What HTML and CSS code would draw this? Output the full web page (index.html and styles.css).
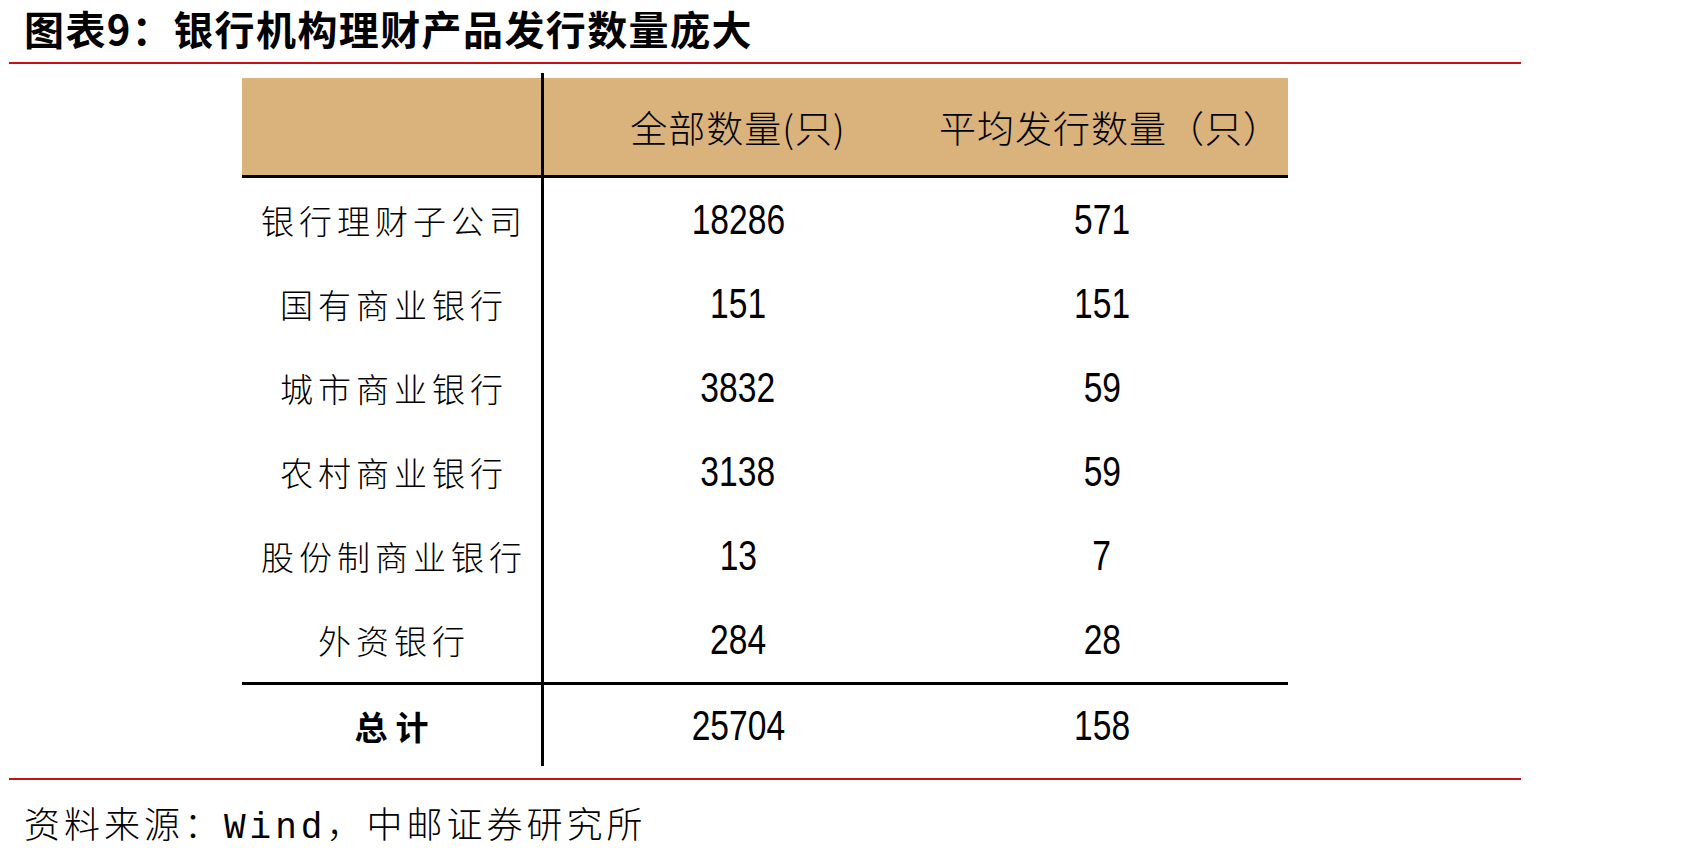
FILE: index.html
```html
<!DOCTYPE html>
<html lang="zh-CN">
<head>
<meta charset="utf-8">
<title>图表9</title>
<link rel="stylesheet" href="styles.css">
</head>
<body>
<div class="page">
  <h1 class="title">图表9：银行机构理财产品发行数量庞大</h1>
  <div class="rule"></div>
  <div class="table">
    <div class="cell head label"></div>
    <div class="cell head">全部数量(只)</div>
    <div class="cell head c3">平均发行数量（只）</div>

    <div class="cell label">银行理财子公司</div>
    <div class="cell num"><span>18286</span></div>
    <div class="cell num c3"><span>571</span></div>

    <div class="cell label">国有商业银行</div>
    <div class="cell num"><span>151</span></div>
    <div class="cell num c3"><span>151</span></div>

    <div class="cell label">城市商业银行</div>
    <div class="cell num"><span>3832</span></div>
    <div class="cell num c3"><span>59</span></div>

    <div class="cell label">农村商业银行</div>
    <div class="cell num"><span>3138</span></div>
    <div class="cell num c3"><span>59</span></div>

    <div class="cell label">股份制商业银行</div>
    <div class="cell num"><span>13</span></div>
    <div class="cell num c3"><span>7</span></div>

    <div class="cell label">外资银行</div>
    <div class="cell num"><span>284</span></div>
    <div class="cell num c3"><span>28</span></div>

    <div class="cell label total">总计</div>
    <div class="cell num total"><span>25704</span></div>
    <div class="cell num total c3"><span>158</span></div>
  </div>
  <div class="rule bottom"></div>
  <p class="source">资料来源：<span class="mono">Wind</span>，中邮证券研究所</p>
</div>
</body>
</html>
```

FILE: styles.css
```css
* { box-sizing: border-box; }
html, body {
  margin: 0;
  padding: 0;
  background: #ffffff;
}
body {
  font-family: "Noto Sans CJK SC", "Noto Sans", sans-serif;
  color: #000;
}
.page {
  width: 1512px;
  margin-left: 9px;
}
.title {
  margin: 0;
  padding-left: 15px;
  font-size: 40px;
  line-height: 56px;
  font-weight: 700;
  letter-spacing: 1.4px;
}
.rule {
  height: 2px;
  background: #c8101a;
  margin-top: 6px;
}
.rule.bottom {
  margin-top: 12px;
}
.table {
  margin-top: 9px;
  margin-left: 233px;
  width: 1046px;
  display: grid;
  grid-template-columns: 302px 388px 356px;
  grid-template-rows: 105px repeat(6, 84px) 84px;
}
.cell {
  display: flex;
  align-items: center;
  justify-content: center;
  white-space: nowrap;
}
.head {
  padding-top: 5px;
  background: #d9b27c;
  background-clip: content-box;
  border-bottom: 3px solid #000;
  font-size: 37px;
  font-weight: 300;
  letter-spacing: 1px;
}
.label {
  border-right: 3px solid #000;
  font-size: 33px;
  font-weight: 300;
  letter-spacing: 5px;
  padding-left: 5px;
}
.head.label {
  padding-left: 0;
}
.num {
  font-family: "Liberation Sans", Arial, sans-serif;
  font-size: 42px;
}
.num.c3 {
  padding-right: 16px;
}
.num span {
  display: inline-block;
  transform: scaleX(0.8);
}
.total {
  border-top: 3px solid #000;
}
.label.total {
  font-weight: 700;
  letter-spacing: 8px;
  padding-left: 8px;
}
.source {
  margin: 15px 0 0 0;
  padding-left: 15px;
  font-size: 36px;
  line-height: 54px;
  font-weight: 300;
  letter-spacing: 4px;
}
.mono {
  font-family: "Liberation Mono", monospace;
}
```
